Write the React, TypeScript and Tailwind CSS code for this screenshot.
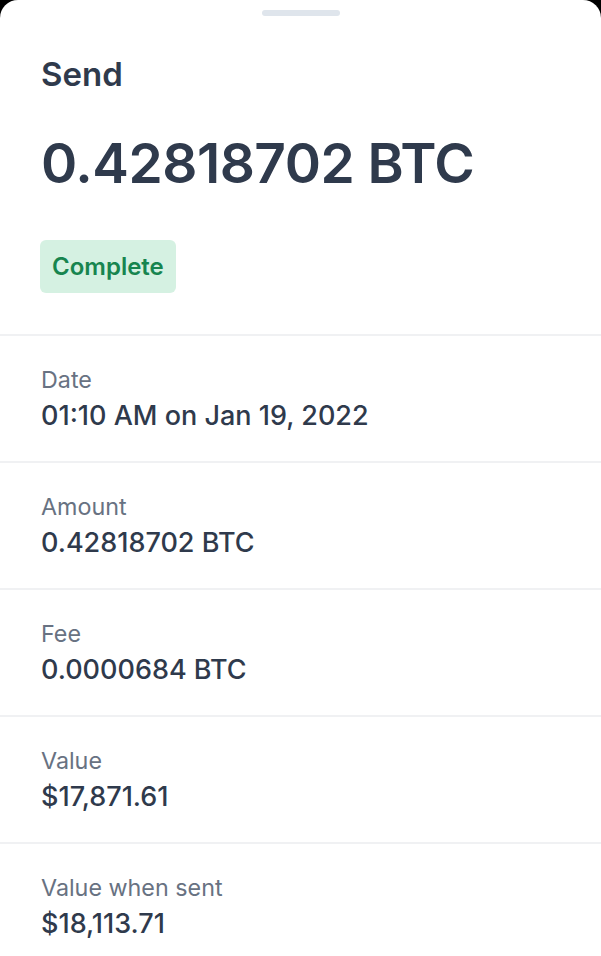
const rows = [
  { label: "Date", value: "01:10 AM on Jan 19, 2022" },
  { label: "Amount", value: "0.42818702 BTC" },
  { label: "Fee", value: "0.0000684 BTC" },
  { label: "Value", value: "$17,871.61" },
  { label: "Value when sent", value: "$18,113.71" },
];

export default function App() {
  return (
    <div className="bg-black h-[956px] w-[601px] overflow-hidden font-['Inter',sans-serif]">
      <div className="bg-white rounded-t-[18px] h-full flex flex-col">
        {/* drag handle */}
        <div className="flex justify-center pt-[10px] shrink-0">
          <div className="w-[78px] h-[6px] rounded-full bg-[#dfe5ec]" />
        </div>

        <div className="shrink-0 px-[41px] pt-[40px] pb-[41px] border-b-2 border-[#f0f1f3]">
          <h2 className="text-[33px] leading-[36px] font-semibold text-[#2f3a4c]">Send</h2>
          <p className="mt-[41px] text-[55px] leading-[60px] font-semibold text-[#2f3a4c] tracking-[-0.5px]">
            0.42818702 BTC
          </p>
          <div className="mt-[47px] -ml-px inline-flex items-center h-[53px] px-[12px] rounded-[6px] bg-[#d5f1e2]">
            <span className="text-[24px] font-semibold text-[#17854f]">Complete</span>
          </div>
        </div>

        {rows.map((r) => (
          <div key={r.label} className="shrink-0 px-[41px] h-[127px] flex flex-col justify-center border-b-2 border-[#f0f1f3]">
            <span className="text-[23.3px] leading-[28px] text-[#687282]">{r.label}</span>
            <span className="mt-[6px] text-[27px] leading-[32px] font-medium text-[#2f3a4c]">{r.value}</span>
          </div>
        ))}
      </div>
    </div>
  );
}
